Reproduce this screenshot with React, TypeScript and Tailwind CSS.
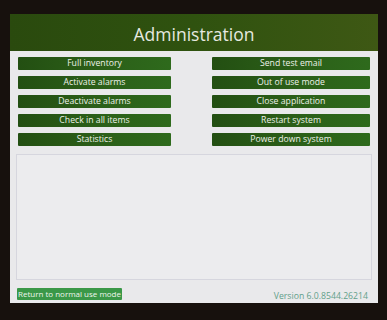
const left = ["Full inventory", "Activate alarms", "Deactivate alarms", "Check in all items", "Statistics"];
const right = ["Send test email", "Out of use mode", "Close application", "Restart system", "Power down system"];

function AdminButton({ label }: { label: string }) {
  return (
    <button className="h-[13px] w-full rounded-[1px] bg-gradient-to-r from-[#234f12] via-[#2b5e18] to-[#2e6a1c] text-[8.7px] leading-[13px] text-[#eef2ea]">
      {label}
    </button>
  );
}

export default function App() {
  return (
    <div
      className="h-[320px] w-[387px] overflow-hidden bg-[#17110d] pl-[10px] pt-[14px]"
      style={{ fontFamily: '"Open Sans", "Noto Sans", sans-serif' }}
    >
      <div className="flex h-[289px] w-[368px] flex-col bg-[#e9e9eb]">
        <div className="flex h-[38px] items-center justify-center bg-gradient-to-r from-[#2a4a0e] via-[#2f520f] to-[#3e5814] pt-[4px] text-[17.5px] text-[#e6e9e0]">
          Administration
        </div>
        <div className="grid grid-cols-[153px_158px] gap-x-[41px] gap-y-[6px] px-[8px] pt-[6px]">
          {left.map((l, i) => (
            <div key={l} className="contents">
              <AdminButton label={l} />
              <AdminButton label={right[i]} />
            </div>
          ))}
        </div>
        <div className="mx-[6px] mt-[8px] h-[126px] shrink-0 border border-[#d6d6de] bg-[#ececee]" />
        <div className="flex items-center justify-between pl-[7px] pr-[10px] pt-[6px]">
          <button className="h-[12px] w-[105px] rounded-[1px] bg-[#3a9848] text-[8px] leading-[12px] text-[#eef5ee]">
            Return to normal use mode
          </button>
          <span className="pt-[4px] text-[8.7px] text-[#62a08a]">Version 6.0.8544.26214</span>
        </div>
      </div>
    </div>
  );
}
